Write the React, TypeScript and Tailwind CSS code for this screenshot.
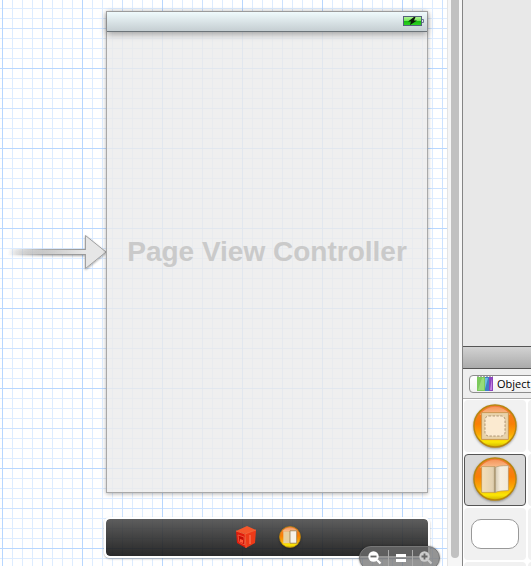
import React from 'react';

const BatteryIcon = () => (
  <svg width="21" height="11" viewBox="0 0 21 11" aria-hidden="true">
    <defs>
      <linearGradient id="charge" x1="0" y1="0" x2="0" y2="1">
        <stop offset="0" stopColor="#b9f59c" />
        <stop offset="0.45" stopColor="#72e85a" />
        <stop offset="0.5" stopColor="#17bd10" />
        <stop offset="1" stopColor="#2fd324" />
      </linearGradient>
    </defs>
    <rect x="0.5" y="0.5" width="18" height="9" fill="url(#charge)" stroke="#53627a" />
    <path d="M19 3.5h1.5v3H19" fill="#dfe5ec" stroke="#6a7690" />
    <path d="M11 1 5 5.5h3L7 9l7-4.5h-3L12.5 1z" fill="#0b1a08" />
  </svg>
);

const EntryArrow = () => (
  <svg width="98" height="40" viewBox="0 0 98 40" className="shrink-0" aria-hidden="true">
    <defs>
      <linearGradient id="shaftLine" gradientUnits="userSpaceOnUse" x1="0" y1="0" x2="76" y2="0">
        <stop offset="0" stopColor="#999" stopOpacity="0" />
        <stop offset="0.5" stopColor="#999" stopOpacity="0.8" />
        <stop offset="1" stopColor="#999" />
      </linearGradient>
      <linearGradient id="shaftFill" gradientUnits="userSpaceOnUse" x1="0" y1="0" x2="76" y2="0">
        <stop offset="0" stopColor="#e6e6e6" stopOpacity="0" />
        <stop offset="0.5" stopColor="#dadada" stopOpacity="0.7" />
        <stop offset="1" stopColor="#e6e6e6" />
      </linearGradient>
      <filter id="arrowShadow" x="-10%" y="-20%" width="120%" height="150%">
        <feDropShadow dx="0" dy="1" stdDeviation="1" floodColor="#000" floodOpacity="0.35" />
      </filter>
    </defs>
    <g filter="url(#arrowShadow)">
      <rect x="0" y="17" width="78" height="6" fill="url(#shaftLine)" />
      <path d="M77.5 3.5 98 20 77.5 36.5z" fill="#e6e6e6" stroke="#a0a0a0" strokeLinejoin="round" />
      <rect x="0" y="18" width="79" height="4" fill="url(#shaftFill)" />
    </g>
  </svg>
);

const OrbDefs = () => (
  <svg width="0" height="0" className="absolute" aria-hidden="true">
    <defs>
      <linearGradient id="orb" x1="0" y1="0" x2="0" y2="1">
        <stop offset="0" stopColor="#f07a3a" />
        <stop offset="0.45" stopColor="#f97f04" />
        <stop offset="0.7" stopColor="#fba905" />
        <stop offset="0.88" stopColor="#fae805" />
        <stop offset="1" stopColor="#d0b000" />
      </linearGradient>
      <linearGradient id="gloss" x1="0" y1="0" x2="0" y2="1">
        <stop offset="0" stopColor="#fff" stopOpacity="0.2" />
        <stop offset="1" stopColor="#fff" stopOpacity="0.5" />
      </linearGradient>
      <linearGradient id="pageLeft" x1="0" y1="0" x2="1" y2="0">
        <stop offset="0" stopColor="#f4dfb9" />
        <stop offset="0.8" stopColor="#e3d2b2" />
        <stop offset="1" stopColor="#c9b897" />
      </linearGradient>
      <linearGradient id="pageRight" x1="0" y1="0" x2="1" y2="0">
        <stop offset="0" stopColor="#d2c7af" />
        <stop offset="0.4" stopColor="#f6eedf" />
        <stop offset="1" stopColor="#f2eada" />
      </linearGradient>
    </defs>
  </svg>
);

const Orb = ({ size, children }: { size: number; children: React.ReactNode }) => (
  <svg width={size} height={size} viewBox="0 0 46 46" className="shrink-0 drop-shadow-[0_1px_1px_rgba(0,0,0,0.35)]" aria-hidden="true">
    <circle cx="23" cy="23" r="22" fill="url(#orb)" stroke="#b8860e" strokeWidth="1.5" />
    <path d="M7 11a20 20 0 0 1 32 0z" fill="url(#gloss)" />
    {children}
  </svg>
);

const Book = () => (
  <>
    <path d="M9 10h14v27H9z" fill="url(#pageLeft)" stroke="#b28b4c" strokeWidth="0.6" />
    <path d="M23 11q3-2 14-2v26q-9 0-14 2z" fill="url(#pageRight)" stroke="#a68d61" strokeWidth="0.6" />
    <path d="M23 11v26" stroke="#a39272" />
  </>
);

const SmallBook = () => (
  <>
    <path d="M9 11h14v25H9z" fill="#e6cf9f" />
    <path d="M23 10h14v26H23z" fill="#f7f2e8" stroke="#8d7444" strokeWidth="1.5" />
  </>
);

const CubeIcon = () => (
  <svg width="22" height="24" viewBox="0 0 22 24" aria-hidden="true">
    <path d="M1 6 12 1l9 4-10 4z" fill="#f4572b" />
    <path d="M1 6l9 3 1 14-9-5z" fill="#e01c0c" />
    <path d="M10 9l11-4-1 13-9 5z" fill="#ee3a18" />
    <path d="M3 10l6 2 .5 8L4 17z" fill="#c40e06" stroke="#f86a4a" strokeWidth="0.7" />
    <path d="M5 14l3 1v3l-3-1z" fill="#ff5a3a" />
    <path d="M15 10v9" fill="none" stroke="#ff9a78" strokeWidth="0.8" />
    <path d="M1 6l9 3 11-4M10 9l1 14" fill="none" stroke="#fa6a3c" strokeWidth="0.8" />
  </svg>
);

const Magnifier = ({ plus = false }: { plus?: boolean }) => (
  <svg width="14" height="14" viewBox="0 0 14 14" className="shrink-0" aria-hidden="true">
    <circle cx="5.5" cy="5.5" r="5.2" fill={plus ? '#ccc' : '#fff'} />
    <path d="M9 9l3.5 3.5" stroke={plus ? '#ccc' : '#fff'} strokeWidth="2.2" />
    <path d={plus ? 'M2.5 5.5h6M5.5 2.5v6' : 'M2.5 5.5h6'} stroke="#666" strokeWidth="1.8" />
  </svg>
);

const LibraryIcon = () => (
  <svg width="16" height="16" viewBox="0 0 16 16" className="shrink-0" aria-hidden="true">
    <path d="M0 1h8v14H0z" fill="#7cc95c" />
    <path d="M1 14 5 2h2v12z" fill="#98dc78" />
    <path d="M8 1h4v14H8z" fill="#3f7fc8" />
    <path d="M8 2h3L8 13z" fill="#70c0dc" />
    <path d="M12 1h4v14h-4z" fill="#8a45bd" />
    <path d="M13 14l2-12v12z" fill="#c884e2" />
    <path d="M0 .5h16" stroke="#aaa" strokeDasharray="2 1" />
  </svg>
);

const Canvas = () => (
  <main className="relative h-full min-w-0 flex-1 overflow-hidden bg-white">
    {/* 10px cells, with heavier rules every 40px and 80px */}
    <svg className="absolute inset-0 h-full w-full" aria-hidden="true">
      <defs>
        <pattern id="grid" x="2" y="68" width="80" height="80" patternUnits="userSpaceOnUse">
          <path
            d="M10.5 0v80M20.5 0v80M30.5 0v80M50.5 0v80M60.5 0v80M70.5 0v80M0 10.5h80M0 20.5h80M0 30.5h80M0 50.5h80M0 60.5h80M0 70.5h80"
            stroke="#ddecff"
          />
          <path d="M40.5 0v80M0 40.5h80" stroke="#cce2ff" />
          <path d="M.5 0v80M0 .5h80" stroke="#b8d7ff" />
        </pattern>
      </defs>
      <rect width="100%" height="100%" fill="url(#grid)" />
    </svg>

    <div className="relative flex items-center pt-[11px] pr-[19px] pl-2">
      <EntryArrow />
      <section className="flex h-[482px] flex-1 flex-col border border-[#a9a9a9] bg-[#ebebeb]/80 shadow-[0_1px_4px_rgba(0,0,0,0.3)]">
        <div className="flex h-5 shrink-0 items-center justify-end border-b border-[#6c7479] bg-linear-to-b from-[#effafc] to-[#c5ced2] pr-[3px] shadow-[0_2px_7px_rgba(0,0,0,0.35)]">
          <BatteryIcon />
        </div>
        <div className="flex flex-1 items-center justify-center pb-5">
          <h1 className="text-[28px] leading-8 font-bold whitespace-nowrap text-[#cacaca]">Page View Controller</h1>
        </div>
      </section>
    </div>

    <div className="relative mt-6 mr-[17px] ml-[104px] flex h-[41px] items-center justify-center gap-5 rounded-md border-2 border-white bg-linear-to-b from-[#4c4c4c]/90 to-[#121212]/90 bg-clip-padding pb-0.5 pl-0.5 shadow-[0_1px_2px_rgba(0,0,0,0.3)]">
      <button type="button" aria-label="First Responder" className="flex w-6 justify-center">
        <CubeIcon />
      </button>
      <button type="button" aria-label="Page View Controller" className="flex w-6 justify-center">
        <Orb size={22}>
          <SmallBook />
        </Orb>
      </button>
    </div>

    <div className="absolute right-[7px] -bottom-1 flex h-6 w-[81px] items-center justify-between rounded-full border border-[#777] bg-[#707070]/75 pr-1.5 pl-2 shadow-[0_0_2px_rgba(0,0,0,0.4)]">
      <button type="button" aria-label="Zoom out">
        <Magnifier />
      </button>
      <span className="h-4 w-px bg-[#aaa]" />
      <button type="button" aria-label="Actual size" className="flex w-2.5 flex-col gap-0.5">
        <span className="h-[3px] bg-white" />
        <span className="h-[3px] bg-white" />
      </button>
      <span className="h-4 w-px bg-[#aaa]" />
      <button type="button" aria-label="Zoom in">
        <Magnifier plus />
      </button>
    </div>
  </main>
);

const Library = () => (
  <aside className="flex h-full w-[69px] shrink-0 flex-col overflow-hidden border-l border-[#858585] bg-[#e8e8e8]">
    <div className="flex-1" />
    <div className="h-[23px] shrink-0 border-y border-[#555] bg-linear-to-b from-[#d2d2d2] to-[#ababab]" />
    <div className="flex h-[30px] shrink-0 items-center border-b border-[#aaa] bg-[#eeeeee] pl-1.5">
      <button
        type="button"
        className="flex h-[18px] w-20 shrink-0 items-center gap-1 rounded border border-[#8d8d8d] bg-linear-to-b from-white to-[#f1f1f1] pl-[7px] font-['Open_Sans','Noto_Sans',sans-serif] text-[11px] leading-4 font-medium text-black"
      >
        <LibraryIcon />
        Object
      </button>
    </div>
    <div className="grid h-[167px] shrink-0 grid-cols-[62px_62px] auto-rows-[52px] content-start gap-0.5 overflow-hidden bg-white pt-px pl-px">
      <button type="button" aria-label="View Controller" className="flex items-center justify-center rounded bg-[#f1f1f1]">
        <Orb size={44}>
          <path d="M9 9h28v28H9z" fill="#e8d3ab" stroke="#c99650" />
          <rect x="12.5" y="12.5" width="21" height="21" rx="4" fill="#fbead0" stroke="#ab9270" strokeDasharray="2.5 1.5" />
        </Orb>
      </button>
      <span className="rounded bg-[#f1f1f1]" />
      <button
        type="button"
        aria-label="Page View Controller"
        className="flex items-center justify-center rounded border border-[#555] bg-[#d8d8d8] pb-0.5"
      >
        <Orb size={44}>
          <Book />
        </Orb>
      </button>
      <span className="rounded bg-[#f1f1f1]" />
      <button type="button" aria-label="Round Rect Button" className="flex items-center justify-center rounded bg-[#f1f1f1]">
        <span className="h-[30px] w-12 rounded-[10px] border border-[#999] bg-white" />
      </button>
      <span className="rounded bg-[#f1f1f1]" />
      <span className="rounded bg-[#f1f1f1]" />
      <span className="rounded bg-[#f1f1f1]" />
    </div>
  </aside>
);

const App: React.FC = () => (
  <div className="flex h-screen overflow-hidden font-['Liberation_Sans',Arial,sans-serif]">
    <OrbDefs />
    <Canvas />
    <div className="flex w-[15px] shrink-0 flex-col border-l border-[#e4e4e4] bg-[#f6f6f6] pr-[3px] pb-2 pl-[3px]">
      <div className="flex-1 rounded-b-full bg-[#c1c1c1]" />
    </div>
    <Library />
  </div>
);

export default App;
